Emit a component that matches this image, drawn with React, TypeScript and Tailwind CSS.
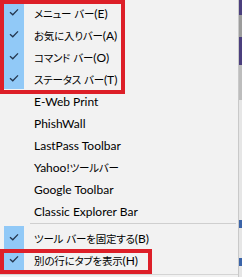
import React from "react";

type Item = { label: string; checked?: boolean };

const top: Item[] = [
  { label: "メニュー バー(E)", checked: true },
  { label: "お気に入りバー(A)", checked: true },
  { label: "コマンド バー(O)", checked: true },
  { label: "ステータス バー(T)", checked: true },
  { label: "E-Web Print" },
  { label: "PhishWall" },
  { label: "LastPass Toolbar" },
  { label: "Yahoo!ツールバー" },
  { label: "Google Toolbar" },
  { label: "Classic Explorer Bar" },
];

const bottom: Item[] = [
  { label: "ツール バーを固定する(B)", checked: true },
  { label: "別の行にタブを表示(H)", checked: true },
];

function Check() {
  return (
    <svg width="10" height="8" viewBox="0 0 10 8">
      <path d="M1 4.2 L3.8 6.8 L9 1.4" fill="none" stroke="#23364f" strokeWidth="1.3" />
    </svg>
  );
}

function Label({ text }: { text: string }) {
  const parts = text.match(/[\u3000-\u9fff\uff00-\uffef]+|[^\u3000-\u9fff\uff00-\uffef]+/g) || [];
  return (
    <span className="whitespace-nowrap leading-none text-black">
      {parts.map((p, i) =>
        /[\u3000-\u9fff\uff00-\uffef]/.test(p) ? (
          <span
            key={i}
            className="text-[10.5px] tracking-[-0.2px] [font-feature-settings:'palt']"
            style={{ fontFamily: '"Noto Sans CJK JP", sans-serif' }}
          >
            {p}
          </span>
        ) : (
          <span key={i} className="text-[12px]" style={{ fontFamily: 'Lato, sans-serif' }}>
            {p}
          </span>
        )
      )}
    </span>
  );
}

function Row({ item }: { item: Item }) {
  return (
    <div className="flex h-[22px] items-center">
      <div className="w-[4px]" />
      <div
        className={`flex h-full w-[20px] items-center justify-center ${item.checked ? "bg-[#91c9f7]" : ""}`}
      >
        {item.checked ? <Check /> : null}
      </div>
      <div className="w-[10px]" />
      <Label text={item.label} />
    </div>
  );
}

export default function App() {
  return (
    <div className="relative flex h-[277px] w-[242px] overflow-hidden bg-[#f4f4f4]">
      <div className="flex h-full w-[239px] flex-col border-r border-[#c9c9c9] bg-[#f2f2f2]">
        <div className="flex h-[275px] flex-col border-b border-[#d4d4d4] pt-[1px]">
          {top.map((it) => (
            <Row key={it.label} item={it} />
          ))}
          <div className="flex h-[5px] items-center pl-[30px] pr-[2px]">
            <div className="h-px w-full bg-[#cfcfcf]" />
          </div>
          {bottom.map((it) => (
            <Row key={it.label} item={it} />
          ))}
        </div>
      </div>
      <div className="flex w-[3px] flex-col">
        <div className="h-[15px] bg-[#4b3f7d]" />
        <div className="h-[22px] bg-[#9c9c9c]" />
        <div className="h-[28px] bg-[#4b3f7d]" />
        <div className="h-[35px] bg-[#bdbdbd]" />
        <div className="h-[120px] bg-[#e6e6e6]" />
        <div className="h-[8px] bg-[#3b64a8]" />
        <div className="h-[30px] bg-[#e6e6e6]" />
        <div className="h-[8px] bg-[#3b64a8]" />
        <div className="flex-1 bg-[#e6e6e6]" />
      </div>
      <div className="pointer-events-none absolute left-0 top-0 h-[94px] w-[125px] border-[4px] border-[#dd1f28]" />
      <div className="pointer-events-none absolute left-0 top-[249px] h-[25px] w-[152px] border-[4px] border-[#dd1f28]" />
    </div>
  );
}
